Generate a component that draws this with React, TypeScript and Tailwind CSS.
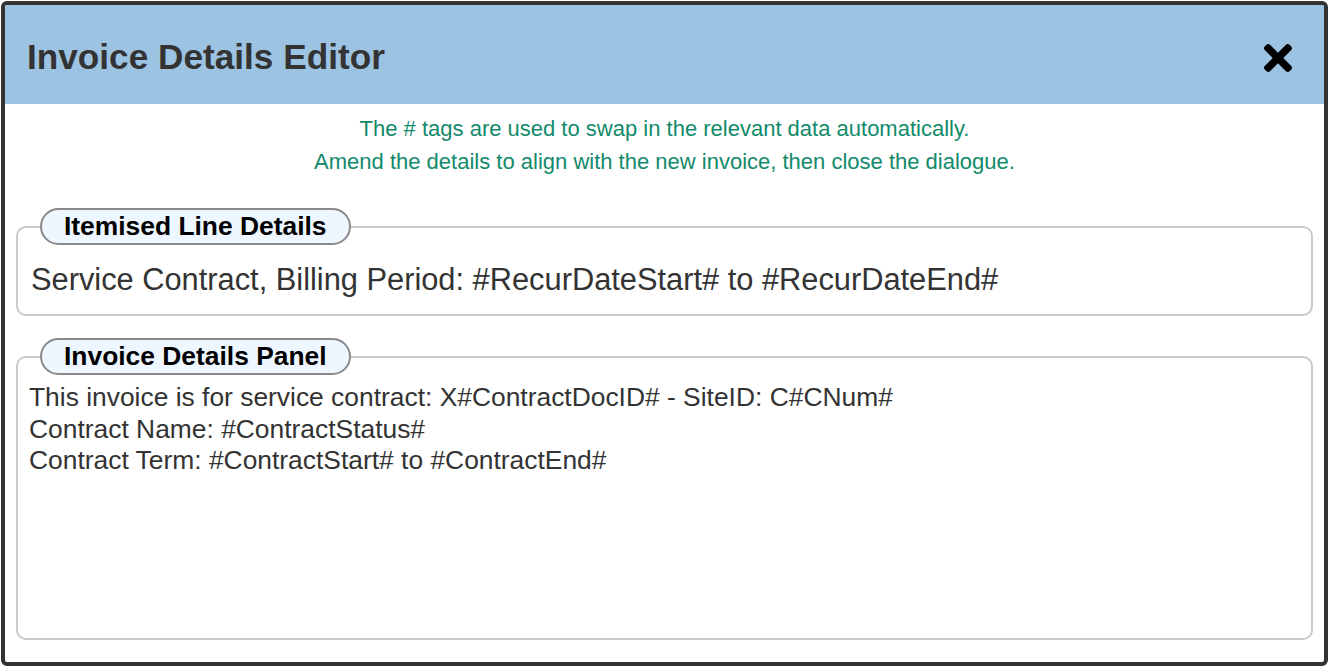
import React from 'react';

const CloseIcon = () => (
  <svg viewBox="0 80 352 352" className="w-[28px] h-[28px]" fill="#000">
    <path d="M242.72 256l100.07-100.07c12.28-12.28 12.28-32.19 0-44.48l-22.24-22.24c-12.28-12.28-32.19-12.28-44.48 0L176 189.28 75.93 89.21c-12.28-12.28-32.19-12.28-44.48 0L9.21 111.45c-12.28 12.28-12.28 32.19 0 44.48L109.28 256 9.21 356.07c-12.28 12.28-12.28 32.19 0 44.48l22.24 22.24c12.28 12.28 32.2 12.28 44.48 0L176 322.72l100.07 100.07c12.28 12.28 32.2 12.28 44.48 0l22.24-22.24c12.28-12.28 12.28-32.19 0-44.48L242.72 256z" />
  </svg>
);

const Legend = ({ children, className }: { children: React.ReactNode; className: string }) => (
  <legend
    className={`${className} px-[22px] rounded-full border-2 border-[#8a8a8a] bg-[#eef6ff] text-[26.4px] leading-[33px] font-bold text-black`}
  >
    {children}
  </legend>
);

const App = () => {
  return (
    <div className="w-[1330px] h-[668px] bg-white pt-px pl-px font-['Liberation_Sans',Arial,sans-serif]">
      <div className="w-[1327px] h-[665px] border-4 border-[#333] rounded-[6px] bg-white flex flex-col overflow-hidden">
        {/* Header */}
        <div className="h-[99px] shrink-0 bg-[#9dc3e3] flex items-center justify-between pl-[22px] pr-[32px] pt-[6px]">
          <h2 className="text-[35.2px] font-bold text-[#333]">Invoice Details Editor</h2>
          <button type="button" className="flex items-center">
            <CloseIcon />
          </button>
        </div>

        {/* Instructions */}
        <div className="pt-[8px] text-center text-[22px] leading-[33px] text-[#128a6b]">
          <p>The # tags are used to swap in the relevant data automatically.</p>
          <p>Amend the details to align with the new invoice, then close the dialogue.</p>
        </div>

        {/* Itemised Line Details */}
        <fieldset className="mx-[11px] mt-[30px] border-2 border-[#cacaca] rounded-[10px] pl-[13px] pr-3 pt-[17px] pb-[16px]">
          <Legend className="ml-[9px]">Itemised Line Details</Legend>
          <div className="text-[30.8px] leading-[36px] text-[#333]">
            Service Contract, Billing Period: #RecurDateStart# to #RecurDateEnd#
          </div>
        </fieldset>

        {/* Invoice Details Panel */}
        <fieldset className="mx-[11px] mt-[22px] mb-[22px] flex-1 border-2 border-[#cacaca] rounded-[10px] pl-[11px] pr-3 pt-[7px]">
          <Legend className="ml-[11px]">Invoice Details Panel</Legend>
          <div className="text-[26.4px] leading-[31.5px] text-[#333]">
            <p>This invoice is for service contract: X#ContractDocID# - SiteID: C#CNum#</p>
            <p>Contract Name: #ContractStatus#</p>
            <p>Contract Term: #ContractStart# to #ContractEnd#</p>
          </div>
        </fieldset>
      </div>
    </div>
  );
};

export default App;
